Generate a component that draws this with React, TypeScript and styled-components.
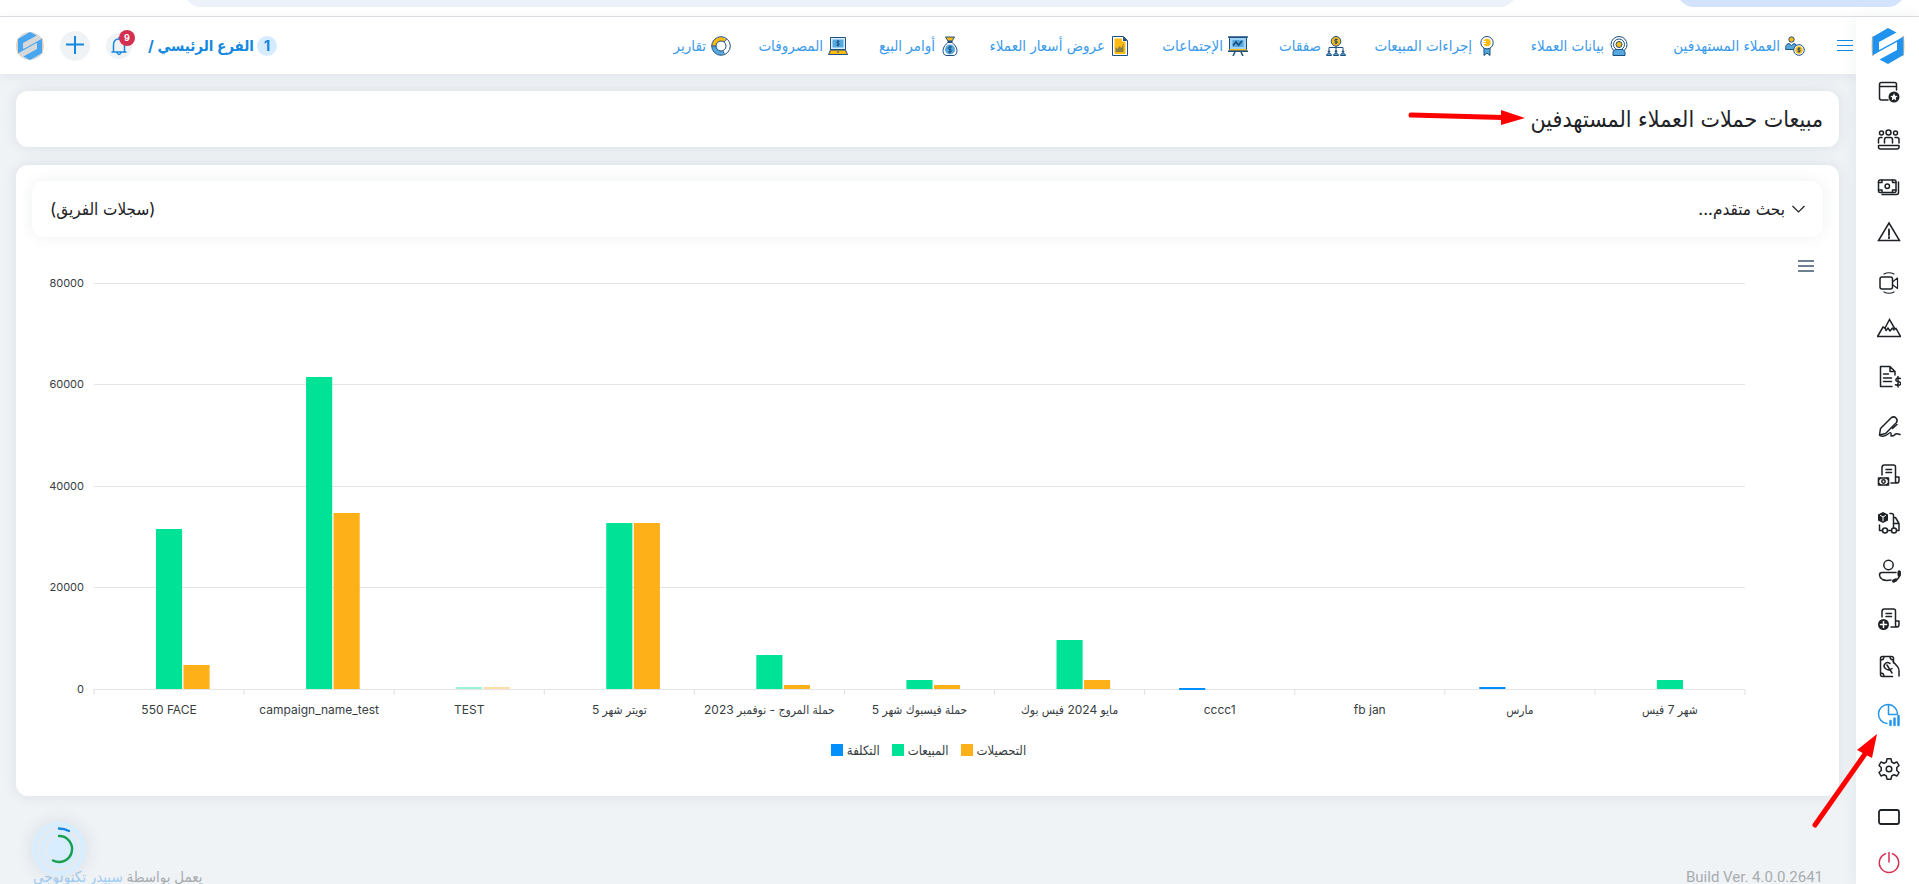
import React from "react";
import styled, { createGlobalStyle } from "styled-components";

const GlobalStyle = createGlobalStyle`
  *, *::before, *::after { box-sizing: border-box; }
  body {
    margin: 0;
    background: #eff3f6;
    color: #1e2226;
    font-family: Inter, "DejaVu Sans Condensed", "DejaVu Sans", sans-serif;
    font-size: 14px;
  }
  button { font: inherit; color: inherit; border: 0; background: none; padding: 0; cursor: pointer; }
  a { color: inherit; text-decoration: none; }
  svg { display: block; flex: none; }
`;

const Page = styled.div`
  position: relative;
  display: flex;
  flex-direction: column;
  height: 100vh;
  overflow: hidden;
`;

const BrowserStrip = styled.div`
  display: flex;
  gap: 160px;
  flex: none;
  height: 17px;
  padding: 0 14px 0 184px;
  overflow: hidden;
  background: #fff;
  border-bottom: 1px solid #dfe1e5;
`;

const Pill = styled.div<{ $active?: boolean }>`
  flex: ${(p) => (p.$active ? "0 0 228px" : "1")};
  height: 34px;
  margin-top: -27px;
  border-radius: 17px;
  background: ${(p) => (p.$active ? "#d3e3fd" : "#ecf1fa")};
`;

const Shell = styled.div`
  display: flex;
  flex: 1;
  min-height: 0;
`;

const Sidebar = styled.aside`
  z-index: 2;
  display: flex;
  flex-direction: column;
  align-items: center;
  flex: 0 0 63px;
  padding-top: 11px;
  background: #fff;
  box-shadow: 0 0 14px rgba(40, 60, 90, 0.08);
`;

const SideNav = styled.nav`
  display: flex;
  flex-direction: column;
  margin-top: 4px;
  padding-left: 2px;
`;

const SideLink = styled.a<{ $tone?: string }>`
  display: flex;
  align-items: center;
  justify-content: center;
  width: 60px;
  height: 48px;
  color: ${(p) => p.$tone || "#1e2226"};
`;

const Content = styled.div`
  display: flex;
  flex-direction: column;
  flex: 1;
  min-width: 0;
`;

const Header = styled.header`
  z-index: 1;
  display: flex;
  align-items: center;
  flex: none;
  height: 57px;
  padding: 0 3px 0 16px;
  background: #fff;
  box-shadow: 0 2px 10px rgba(40, 60, 90, 0.08);
`;

const MenuButton = styled.button`
  color: #1488e0;
`;

const TopNav = styled.nav`
  display: flex;
  gap: 32px;
  flex: 1;
  padding-right: 32px;
`;

const TopLink = styled.a<{ $w: number }>`
  display: flex;
  align-items: center;
  gap: 5px;
  width: ${(p) => p.$w}px;
  white-space: nowrap;
  font-size: 15px;
  line-height: 20px;
  color: #3a9bea;
`;

const Branch = styled.div`
  display: flex;
  align-items: center;
  gap: 3px;
  margin-left: 16px;
  color: #1488e0;
  font-size: 15px;
  font-weight: 700;
  white-space: nowrap;
`;

const Count = styled.span`
  display: grid;
  place-items: center;
  width: 20px;
  height: 20px;
  border-radius: 50%;
  background: #d6ecfe;
`;

const RoundButton = styled.button<{ $size: number; $gap: number }>`
  position: relative;
  display: grid;
  place-items: center;
  width: ${(p) => p.$size}px;
  height: ${(p) => p.$size}px;
  margin-left: ${(p) => p.$gap}px;
  border-radius: 50%;
  background: #eff3f6;
  color: #1488e0;
`;

const Alert = styled.span`
  position: absolute;
  top: -3px;
  left: 13px;
  display: grid;
  place-items: center;
  width: 16px;
  height: 16px;
  border-radius: 50%;
  background: #d32f50;
  color: #fff;
  font-size: 9px;
  font-weight: 700;
`;

const Main = styled.main`
  display: flex;
  flex-direction: column;
  gap: 18px;
  padding: 17px 17px 0 16px;
`;

const Card = styled.section`
  padding: 16px;
  border-radius: 12px;
  background: #fff;
  box-shadow: 0 0 14px rgba(40, 60, 90, 0.1);
`;

const TitleCard = styled(Card)`
  display: flex;
  align-items: center;
  height: 56px;
  padding: 0 16px;
`;

const Title = styled.h1`
  position: relative;
  margin: 0;
  font-size: 23px;
  line-height: 30px;
  font-weight: 400;
  white-space: nowrap;
`;

const SearchBar = styled.div`
  display: flex;
  align-items: center;
  justify-content: space-between;
  height: 56px;
  padding: 0 18px;
  border-radius: 12px;
  box-shadow: 0 0 14px rgba(40, 60, 90, 0.08);
  font-size: 17px;
`;

const SearchToggle = styled.button`
  display: flex;
  align-items: center;
  gap: 7px;
`;

const ChartTools = styled.div`
  display: flex;
  align-items: flex-start;
  height: 46px;
  padding: 23px 9px 0;
`;

const Chart = styled.figure`
  margin: 0;
  padding: 0 78px 0 62px;
  direction: ltr;
`;

const Plot = styled.svg`
  width: 100%;
  height: 406px;
  overflow: visible;
  font-size: 11px;
  fill: #373d3f;
`;

const Categories = styled.div`
  display: grid;
  grid-template-columns: repeat(11, 1fr);
  margin-top: 12px;
  font-size: 12px;
  line-height: 18px;
  color: #373d3f;
`;

const Category = styled.span`
  text-align: center;
  white-space: nowrap;
`;

const Legend = styled.figcaption`
  display: flex;
  justify-content: center;
  gap: 12px;
  margin: 22px 0 21px 18px;
  font-size: 13px;
  line-height: 18px;
  color: #373d3f;
`;

const LegendItem = styled.span<{ $color: string }>`
  display: flex;
  align-items: center;
  gap: 4px;
  &::before {
    content: "";
    width: 12px;
    height: 12px;
    background: ${(p) => p.$color};
  }
`;

const Footer = styled.footer`
  display: flex;
  justify-content: space-between;
  flex: none;
  margin-top: 69px;
  padding: 0 33px;
  font-family: Roboto, "DejaVu Sans Condensed", "DejaVu Sans", sans-serif;
  font-size: 15px;
  line-height: 24px;
  white-space: nowrap;
  color: #a7acb0;
  a { color: #9fcdf3; }
`;

const Progress = styled.div`
  position: absolute;
  left: 32px;
  bottom: 8px;
  border-radius: 50%;
  box-shadow: 0 0 18px rgba(40, 60, 90, 0.12);
`;

const TitleArrow = styled.svg`
  position: absolute;
  right: 298px;
  top: 5px;
`;

const SideArrow = styled.svg`
  position: absolute;
  z-index: 3;
  right: 38px;
  top: 730px;
`;

const Logo = ({ size, ring = "#fff" }: { size: number; ring?: string }) => (
  <svg width={size} height={size} viewBox="0 0 36 36">
    {ring !== "#fff" && <circle cx="18" cy="18" r="18" fill={ring} />}
    <path d="M3 8Q1.600 18 3 28M33 8Q34.400 18 33 28" stroke="#fbcf9f" strokeWidth="2" fill="none" />
    <path
      d="M18 0 26.500 4.500 9 14V22L12 20.500 27.500 12 33.500 8.500V27L18 36 9.500 31.500 27 22V14L24 15.500 8.500 24 2.500 27.500V9Z"
      fill={ring === "#fff" ? "#1f93ee" : "#47a6ef"}
    />
  </svg>
);

const N = "#1d4f80";
const B = "#55a9de";
const Y = "#fdbb12";

const topItems: { label: string; w: number; icon: React.ReactNode }[] = [
  {
    label: "العملاء المستهدفين", w: 144,
    icon: <><circle cx="6.500" cy="3.500" r="2.700" fill={Y} stroke={N} /><path d="M.700 13.500v-2c0-3 2.300-4 3.300-4l2.500 2 2.500-2 2 1v5Z" fill={B} stroke={N} /><circle cx="14" cy="14" r="5.300" fill="#fff" stroke={N} /><circle cx="14" cy="14" r="3.700" fill={Y} /><path d="M15.500 12.300h-2.200q-1 1 0 1.700h1.400q1 .700 0 1.700h-2.200M14 11.300v5.400" stroke={N} fill="none" /></>,
  },
  {
    label: "بيانات العملاء", w: 100,
    icon: <><circle cx="10" cy="8.500" r="8" fill="#fff" stroke={N} /><circle cx="10" cy="8.500" r="5.500" fill="none" stroke={N} /><circle cx="10" cy="8.500" r="3" fill={Y} stroke={N} /><path d="M4 19.500v-3c0-2 2-3 3-3h6c1 0 3 1 3 3v3Z" fill={B} stroke={N} /></>,
  },
  {
    label: "إجراءات المبيعات", w: 119,
    icon: <><path d="M7 11v8.500l3-2.500 3 2.500V11Z" fill={B} stroke={N} /><circle cx="10" cy="6.700" r="6.200" fill="#fff" stroke={N} /><circle cx="10" cy="6.500" r="3.700" fill={Y} /><path d="M6 5.500h3M6 7.500h3" stroke="#fff" /></>,
  },
  {
    label: "صفقات", w: 66,
    icon: <><circle cx="10" cy="5.300" r="4.800" fill={Y} stroke={N} /><path d="M11.700 3.500h-2.700q-1 1 0 1.800h2q1 1 0 1.800H8.500M10 2.500v5.600M10 10v5M3 14v-2.500h14V14" stroke={N} fill="none" /><path d="M.500 19.500c0-3 5-3 5 0ZM7.500 19.500c0-3 5-3 5 0ZM14.500 19.500c0-3 5-3 5 0Z" fill={B} stroke={N} /><circle cx="3" cy="15.500" r="1.300" fill={N} /><circle cx="10" cy="15.500" r="1.300" fill={N} /><circle cx="17" cy="15.500" r="1.300" fill={N} /></>,
  },
  {
    label: "الإجتماعات", w: 86,
    icon: <><path d="M1.500 1.500h17v13h-17Z" fill="#9ed3f5" stroke={N} /><path d="M0 1h20M0 15.200h20" stroke={N} strokeWidth="1.600" /><path d="M1.500 13.700h17" stroke={Y} strokeWidth="1.400" /><path d="M4.500 4h11v7h-11Z" fill={B} /><path d="M5 9.500 8 6l2.500 3L14 5" stroke={N} fill="none" strokeWidth="1.800" /><path d="m7 16-2 4M13 16l2 4" stroke={N} strokeWidth="1.500" /></>,
  },
  {
    label: "عروض أسعار العملاء", w: 138,
    icon: <><path d="M2.500.500h11l4 4v15h-15Z" fill="#fff" stroke={N} /><path d="M4.500 2.500H12v3h3.500V18h-11Z" fill={Y} /><path d="M13 .500v4.500h4.500Z" fill={N} /><path d="M5.500 16v-5l2 2 2-3 2 2 2-5v9Z" fill="#8a8140" /></>,
  },
  {
    label: "أوامر البيع", w: 80,
    icon: <><path d="M5.500 1h9l-2.500 4H8Z" fill={Y} stroke={N} /><path d="M8 6.500h4c2 1.500 5 4.500 5 8 0 3.500-1.500 5-4 5H7c-2.500 0-4-1.500-4-5 0-3.500 3-6.500 5-8Z" fill="#fff" stroke={N} /><circle cx="10" cy="13.500" r="5" fill={B} /><path d="M7.500 5.700h5" stroke={N} strokeWidth="1.500" /><path d="M12 11H9q-1.500 1.200 0 2.400h2q1.500 1.200 0 2.400H8M10 9.500v8" stroke={N} fill="none" /></>,
  },
  {
    label: "المصروفات", w: 85,
    icon: <><path d="M2.500 1.500h15v12h-15Z" fill="#dceefa" stroke={N} /><path d="M4.500 3.500h11v8h-11Z" fill={B} /><path d="M2.500 14h15l2 4.500H.500Z" fill={Y} stroke={N} /><path d="M8.500 15.500h3L10 17Z" fill={N} /><path d="M11.500 5.300H9.300q-1 1 0 2h1.400q1 1 0 2H8.500M10 4v6.500" stroke={N} fill="none" /></>,
  },
  {
    label: "تقارير", w: 56,
    icon: <><circle cx="10" cy="10" r="7" fill="none" stroke="#fff" strokeWidth="5" /><path d="M3 10a7 7 0 0 1 11-5.700" fill="none" stroke={Y} strokeWidth="4" /><path d="M3 10a7 7 0 0 0 9 6.700" fill="none" stroke={B} strokeWidth="4" /><circle cx="10" cy="10" r="9.300" fill="none" stroke={N} /><circle cx="10" cy="10" r="5" fill="none" stroke={N} /><path d="m13 6 2.500-3M.700 10H5M12 15l1.500 3.500" stroke={N} /></>,
  },
];

const sideItems: { label: string; dy?: number; tone?: string; icon: React.ReactNode }[] = [
  { label: "المفضلة", icon: <><path d="M11 20H4.500Q2.500 20 2.500 18V4.500Q2.500 2.500 4.500 2.500h13Q19.500 2.500 19.500 4.500V10M2.500 6.500h17" /><circle cx="17" cy="17" r="5.500" fill="currentColor" stroke="none" /><path d="m17 13.300 1.100 2.500 2.600.200-2 1.800.600 2.600-2.300-1.400-2.300 1.400.600-2.600-2-1.800 2.600-.200Z" fill="#fff" stroke="none" /></> },
  { label: "الموظفون", icon: <><circle cx="4.500" cy="5" r="2" /><circle cx="11.500" cy="4.500" r="2.500" /><circle cx="18.500" cy="5" r="2" /><path d="M1.500 15v-3.500q0-2 2-2H5M22 15v-3.500q0-2-2-2h-2M7.500 15v-3.500q0-2 2-2h4q2 0 2 2V15M1.500 17.500h20.500v1.500q0 2-2 2H3.500q-2 0-2-2Z" /></> },
  { label: "المالية", dy: -1, icon: <><rect x="1.500" y="5" width="17.500" height="12.500" rx="1.500" /><circle cx="10.300" cy="11.200" r="2.200" /><path d="M5 5v2.500H1.500M15.500 5v2.500H19M5 17.500V15H1.500M15.500 17.500V15H19M21.500 7v10.500q0 2-2 2H5" /></> },
  { label: "التنبيهات", dy: -4, icon: <><path d="M12 3 22.500 20.500h-21Z" strokeLinejoin="miter" /><path d="M12 9.500v5.500M12 16.800v1.400" strokeWidth="1.800" /></> },
  { label: "الاجتماعات", dy: -1, icon: <><rect x="3" y="6" width="12.500" height="12" rx="2" /><path d="m16 10.500 4.500-3.500v10.500L16 14M7 3q5-2.500 10 0M7 21q5 2.500 10 0" strokeWidth="1.200" /></> },
  { label: "الأهداف", dy: -4, icon: <><path d="M.500 20.500 6 11l2 1 4.500-8.500L18 13l1-.500 4.500 8Z" strokeLinejoin="miter" /><path d="m8 12 1 2.500 2-2.500 2 3 2.500-3 1.500 2" /></> },
  { label: "الفواتير", dy: -3, icon: <><path d="M15 21.500H3.500v-20H13l5 5V10M13 1.500v5h5M6.500 9h5M6.500 13h8M6.500 16.500h8" /><path d="M23.500 13.500q-4-1.500-4.500.800t2.500 2.200q2.500.500 2 2.500t-5 .700M21 11.500v10.500" /></> },
  { label: "العقود", dy: -1, icon: <><path d="m2.500 20 1-6.500L14.500 2.500q2.500-1.500 4.500.500t.500 4.500L8.500 18.500l-6 1.500ZM3 20.500q4 2 8-1.500t3 2q3 0 4-1.500t5 0M15.500 13.500 20 9.500" /></> },
  { label: "المشتريات", dy: -1, icon: <><path d="M5 12V4.500Q5 2 7.500 2h9q2 0 2 2v10h3.500v3.500q0 2.500-2 2.500h-6M18.500 14v3.500q0 2.500 1.500 2.500M9 6.500h5.500M9 9.500h5.500" /><rect x="1.500" y="15" width="10" height="7" /><path d="M1.500 17 3.500 15M9.500 15l2 2M1.500 20l2 2M9.500 22l2-2" /><circle cx="6.500" cy="18.500" r="1.700" /></> },
  { label: "التوصيل", dy: -1, icon: <><path d="m6 1 5 2.500v6L6 12 1 9.500v-6Z" fill="currentColor" stroke="none" /><path d="M3.500 4.500 6 6l2.500-1.500M6 6v4" stroke="#fff" strokeWidth="1" /><path d="M2.500 14v5.500h3M13 2.500h1.500q2 0 2 2v15M16.500 6.500h2l3.500 6v7h-1.500M16.500 12.500h5M10.500 19.500h4" /><circle cx="8" cy="19.500" r="2.500" /><circle cx="17" cy="19.500" r="2.500" fill="#fff" /></> },
  { label: "الاتصالات", dy: -1, icon: <><circle cx="11.500" cy="6" r="4.700" /><path d="M19 13.500H5Q2.500 13.500 2.500 16t3 4.500q3 1.500 8.500.500" /><path d="M22.500 13q1 7.500-6 9" /><path d="M22.200 13v3M16.700 22l2-1" strokeWidth="3.500" /></> },
  { label: "إضافة مستند", dy: -1, icon: <><path d="M5 10V4.500Q5 2 7.500 2h9q2 0 2 2v10h3.500v3.500q0 2.500-2 2.500h-6M18.500 14v3.500q0 2.500 1.500 2.500M9 6.500h5.500M9 9.500h5.500" /><circle cx="6.500" cy="17.500" r="5.500" fill="currentColor" stroke="none" /><path d="M6.500 14.500v6M3.500 17.500h6" stroke="#fff" /></> },
  { label: "المدفوعات", dy: -1, icon: <><path d="M15.500 21.500H5.500q-2 0-2-2v-16q0-2 2-2h9q2 0 2 2V8M3.500 5Q7 5 7 1.500M13 1.500Q13 5 16.500 5M3.500 18Q7 18 7 21.500M15 13.500Q12 16 9 14t-1.500-4.500Q10 6 13 8.500M10 10l5 8M16 6.500l4 4.500q2 2 2 5v5" /></> },
  { label: "التقارير", dy: -1, tone: "#2496ee", icon: <><path d="M10 20.500A9.500 9.500 0 1 1 20.500 11M11.500 2v9.500H20" /><path d="M13.500 22v-4M17.500 22v-6.500M21.500 22v-9" strokeWidth="2.500" /></> },
  { label: "الإعدادات", dy: 5, icon: <><circle cx="12" cy="12" r="2.800" /><path d="M10 1.800h4l.700 3.200 2.300 1.300 3-1.300 2 3.500-2.200 2v3l2.200 2-2 3.500-3-1.300-2.300 1.300-.700 3.200h-4L9.300 19 7 17.700 4 19l-2-3.500 2.200-2v-3L2 8.500 4 5l3 1.300L9.300 5Z" /></> },
  { label: "الشاشة", dy: 5, icon: <rect x="2" y="5" width="20" height="14" rx="2" strokeWidth="1.800" /> },
  { label: "خروج", dy: 3, tone: "#d32f50", icon: <path d="M8.500 2.700a9.700 9.700 0 1 0 7 0M12 1.500v9.500" /> },
];

const series = ["#008ffb", "#00e396", "#feb019"];
const campaigns: { name: string; values: number[] }[] = [
  { name: "550 FACE", values: [0, 31500, 4700] },
  { name: "campaign_name_test", values: [0, 61400, 34700] },
  { name: "TEST", values: [0, 200, 200] },
  { name: "تويتر شهر 5", values: [0, 32800, 32800] },
  { name: "حملة المروج - نوفمبر 2023", values: [0, 6700, 700] },
  { name: "حملة فيسبوك شهر 5", values: [0, 1700, 700] },
  { name: "مايو 2024 فيس بوك", values: [0, 9700, 1700] },
  { name: "cccc1", values: [-300, 0, 0] },
  { name: "fb jan", values: [0, 0, 0] },
  { name: "مارس", values: [200, 0, 0] },
  { name: "شهر 7 فيس", values: [0, 1700, 0] },
];

const PLOT_H = 406;
const MAX = 80000;
const STEP = 100 / campaigns.length;
const BAR = STEP * 0.1833;

function Bars() {
  return (
    <Plot role="img" aria-label="مبيعات الحملات">
      {[0, 20000, 40000, 60000, 80000].map((v) => {
        const y = Math.floor(PLOT_H * (1 - v / MAX));
        return (
          <g key={v}>
            <line x1="0" x2="100%" y1={y} y2={y} stroke="#e3e5e7" shapeRendering="crispEdges" />
            <text x="-10" y={y + 4} textAnchor="end">{v}</text>
          </g>
        );
      })}
      {[...campaigns, null].map((_, i) => (
        <line key={i} x1={`${i * STEP}%`} x2={`${i * STEP}%`} y1={PLOT_H} y2={PLOT_H + 6} stroke="#e0e0e0" />
      ))}
      {campaigns.map((c, i) =>
        c.values.map((v, s) => {
          if (!v) return null;
          const h = Math.max(Math.round((Math.abs(v) / MAX) * PLOT_H), 2);
          return (
            <rect
              key={`${i}-${s}`}
              x={`${(i + 0.5) * STEP + (s - 1.475) * BAR}%`}
              width={`${BAR * 0.95}%`}
              y={v < 0 ? PLOT_H - 1 : PLOT_H - h}
              height={h}
              fill={series[s]}
              fillOpacity={v === 200 && s > 0 ? 0.4 : 1}
            />
          );
        })
      )}
    </Plot>
  );
}

export default function App() {
  return (
    <Page dir="rtl">
      <GlobalStyle />
      <BrowserStrip dir="ltr">
        <Pill />
        <Pill $active />
      </BrowserStrip>
      <Shell>
        <Sidebar>
          <Logo size={36} />
          <SideNav>
            {sideItems.map((item) => (
              <SideLink key={item.label} href="#" aria-label={item.label} $tone={item.tone}>
                <svg width="24" height="36" viewBox="0 -6 24 36" fill="none" stroke="currentColor" strokeWidth="1.500" strokeLinejoin="round" strokeLinecap="round">
                  <g transform={`translate(0 ${item.dy || 0})`}>{item.icon}</g>
                </svg>
              </SideLink>
            ))}
          </SideNav>
        </Sidebar>
        <Content>
          <Header>
            <MenuButton aria-label="القائمة">
              <svg width="16" height="14" viewBox="0 0 16 14" stroke="currentColor" strokeWidth="1">
                <path d="M0 1.500h16M0 6.500h16M0 11.500h16" />
              </svg>
            </MenuButton>
            <TopNav>
              {topItems.map((item) => (
                <TopLink key={item.label} href="#" $w={item.w}>
                  <svg width="20" height="20" viewBox="0 0 20 20">{item.icon}</svg>
                  {item.label}
                </TopLink>
              ))}
            </TopNav>
            <Branch>
              <Count>1</Count>
              <span>الفرع الرئيسي /</span>
            </Branch>
            <RoundButton $size={26} $gap={16} aria-label="الإشعارات">
              <svg width="18" height="20" viewBox="0 0 18 20" fill="none" stroke="currentColor" strokeWidth="1.500">
                <path d="M1.500 16h15M3.500 16V9Q3.500 3 9 3t5.500 6v7M9 3V1M7 16.500Q9 20.500 11 16.500" />
              </svg>
              <Alert>9</Alert>
            </RoundButton>
            <RoundButton $size={30} $gap={16} aria-label="إضافة">
              <svg width="20" height="20" viewBox="0 0 20 20" stroke="currentColor" strokeWidth="2">
                <path d="M10 0v18M1 8.500h18" />
              </svg>
            </RoundButton>
            <Logo size={28} ring="#d6d8da" />
          </Header>
          <Main>
            <TitleCard>
              <Title>
                مبيعات حملات العملاء المستهدفين
                <TitleArrow width="118" height="18" viewBox="0 0 118 18">
                  <path d="M4 6 96 8.500" stroke="#f00" strokeWidth="5" strokeLinecap="round" />
                  <path d="M94 1v15l24-7Z" fill="#f00" />
                </TitleArrow>
              </Title>
            </TitleCard>
            <Card>
              <SearchBar>
                <SearchToggle>
                  <svg width="13" height="8" viewBox="0 0 13 8" fill="none" stroke="currentColor" strokeWidth="1.200">
                    <path d="m.500 1 6 6 6-6" />
                  </svg>
                  بحث متقدم...
                </SearchToggle>
                <span>(سجلات الفريق)</span>
              </SearchBar>
              <ChartTools>
                <button aria-label="خيارات الرسم">
                  <svg width="16" height="12" viewBox="0 0 16 12" stroke="#6e8192" strokeWidth="2">
                    <path d="M0 1h16M0 6h16M0 11h16" />
                  </svg>
                </button>
              </ChartTools>
              <Chart>
                <Bars />
                <Categories>
                  {campaigns.map((c) => (
                    <Category key={c.name}>{c.name}</Category>
                  ))}
                </Categories>
                <Legend>
                  <LegendItem $color={series[0]}>التكلفة</LegendItem>
                  <LegendItem $color={series[1]}>المبيعات</LegendItem>
                  <LegendItem $color={series[2]}>التحصيلات</LegendItem>
                </Legend>
              </Chart>
            </Card>
          </Main>
          <Footer>
            <span dir="ltr">Build Ver. 4.0.0.2641</span>
            <span>يعمل بواسطة <a href="#">سبيدر تكنولوجي</a></span>
          </Footer>
        </Content>
      </Shell>
      <Progress>
        <svg width="54" height="54" viewBox="0 0 54 54" fill="none">
          <circle cx="27" cy="27" r="27" fill="#d8edff" />
          <circle cx="27" cy="27" r="20.500" stroke="#e8ebee" strokeWidth="2.500" />
          <circle cx="27" cy="27" r="13" stroke="#e8ebee" strokeWidth="2.500" />
          <path d="M27 6.500Q32.500 6.500 37 9" stroke="#1488e0" strokeWidth="2.500" strokeLinecap="round" />
          <path d="M27 14a13 13 0 1 1-6 24.500" stroke="#1aa053" strokeWidth="2.500" strokeLinecap="round" />
        </svg>
      </Progress>
      <SideArrow width="70" height="100" viewBox="0 0 70 100">
        <path d="M4 95 54 24" stroke="#f00" strokeWidth="5" strokeLinecap="round" />
        <path d="M66 4 46 20 61 28Z" fill="#f00" />
      </SideArrow>
    </Page>
  );
}
